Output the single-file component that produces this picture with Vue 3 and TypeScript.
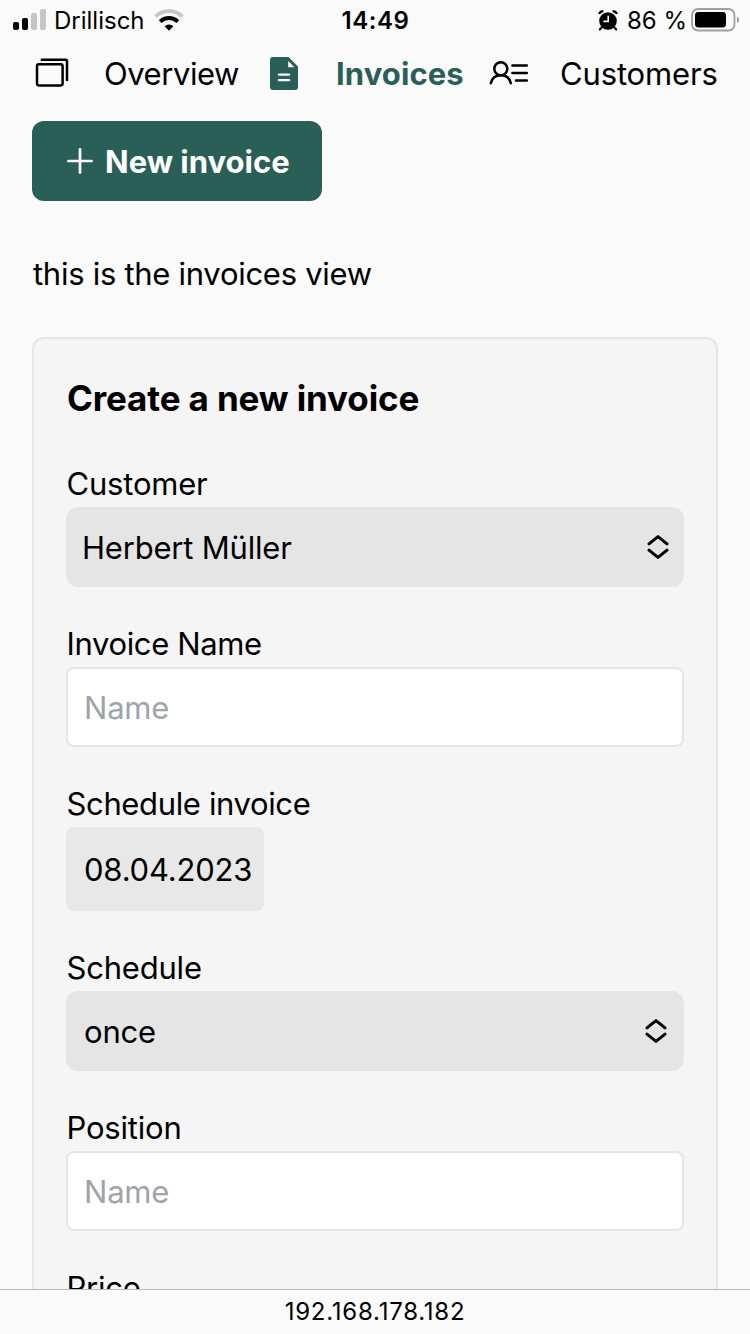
<script setup lang="ts">
interface Field {
  label: string
  kind: 'select' | 'input' | 'date'
  value: string
  name: string
}

const fields: Field[] = [
  { label: 'Customer', kind: 'select', value: 'Herbert Müller', name: 'customer' },
  { label: 'Invoice Name', kind: 'input', value: 'Name', name: 'invoice-name' },
  { label: 'Schedule invoice', kind: 'date', value: '08.04.2023', name: 'date' },
  { label: 'Schedule', kind: 'select', value: 'once', name: 'schedule' },
  { label: 'Position', kind: 'input', value: 'Name', name: 'position' },
  { label: 'Price', kind: 'input', value: '', name: 'price' },
]
</script>

<template>
  <div class="screen">
    <header class="status">
      <div class="status-left">
        <svg class="signal" width="34" height="22" viewBox="0 0 34 22">
          <rect x="0" y="13" width="6" height="8" rx="2" />
          <rect x="9" y="9" width="6" height="12" rx="2" />
          <rect x="18" y="4" width="6" height="17" rx="2" fill="#c6c6c6" />
          <rect x="27" y="0" width="6" height="21" rx="2" fill="#c6c6c6" />
        </svg>
        <span class="carrier">Drillisch</span>
        <svg class="wifi" width="30" height="23" viewBox="0 0 30 23">
          <path d="M1.6 7.4A19.5 19.5 0 0 1 28.4 7.4" fill="none" stroke="#c6c6c6" stroke-width="3.8" />
          <path d="M6.2 12.6A12.8 12.8 0 0 1 23.8 12.6" fill="none" stroke="#000" stroke-width="4" />
          <path d="M10.6 17.2A6.6 6.6 0 0 1 19.4 17.2L15 21.8Z" />
        </svg>
      </div>
      <span class="clock">14:49</span>
      <div class="status-right">
        <svg class="alarm" width="20" height="21" viewBox="0 0 20 21">
          <circle cx="10" cy="11" r="8.8" />
          <path d="M1.2 4A3.6 3.6 0 0 1 5.4 1.4M14.6 1.4A3.6 3.6 0 0 1 18.8 4" fill="none" stroke="#000" stroke-width="2.2" />
          <path d="M3.6 17.4L1.8 19.5M16.4 17.4L18.2 19.5" stroke="#000" stroke-width="2" stroke-linecap="round" />
          <path d="M10.2 5.8V11.4H5.4" fill="none" stroke="#fafafa" stroke-width="1.6" />
        </svg>
        <span class="percent">86 %</span>
        <svg class="battery" width="49" height="24" viewBox="0 0 49 24">
          <rect x="1" y="1" width="42.5" height="21.5" rx="6" fill="none" stroke="#a0a0a0" stroke-width="1.8" />
          <rect x="4" y="4" width="31" height="15.5" rx="3.4" />
          <path d="M46 8.6Q48.2 9.4 48.2 11.8T46 15Z" fill="#a0a0a0" />
        </svg>
      </div>
    </header>

    <nav class="nav">
      <a class="tab overview">
        <svg width="34" height="30" viewBox="0 0 34 30" fill="none" stroke="#000" stroke-width="2.5" stroke-linecap="round" stroke-linejoin="round">
          <rect x="2" y="6.2" width="25.6" height="21.2" rx="1.8" />
          <path d="M6.8 1.7H30.6Q32 1.7 32 3.1V22" />
        </svg>
        <span>Overview</span>
      </a>
      <a class="tab invoices">
        <svg width="28" height="33" viewBox="0 0 28 33">
          <path d="M3 0H18.6L28 9.4V30Q28 33 25 33H3Q0 33 0 30V3Q0 0 3 0Z" fill="#2a5f58" />
          <path d="M18.2 4V10.2H24.4Z" fill="#fafafa" />
          <path d="M8.8 17.6H19.2M8.8 23.2H19.2" stroke="#fafafa" stroke-width="2.2" stroke-linecap="round" />
        </svg>
        <span>Invoices</span>
      </a>
      <a class="tab customers">
        <svg width="40" height="26" viewBox="0 0 40 26" fill="none" stroke="#000" stroke-width="2.5" stroke-linecap="round">
          <circle cx="11.8" cy="7.8" r="6.5" />
          <path d="M1.8 22.2C3 17 6.8 14.3 11.8 14.3S20.6 17 21.8 22.2" />
          <path d="M23.4 4.5H37.8M23.4 12H37.8M27 19.5H37.8" />
        </svg>
        <span>Customers</span>
      </a>
    </nav>

    <main class="content">
      <button class="new-invoice" type="button">
        <svg width="26" height="26" viewBox="0 0 26 26">
          <path d="M13 1.4V24.6M1.4 13H24.6" stroke="#fff" stroke-width="2.7" stroke-linecap="round" />
        </svg>
        <span>New invoice</span>
      </button>
      <p class="intro">this is the invoices view</p>

      <form class="card">
        <h2>Create a new invoice</h2>
        <div v-for="field in fields" :key="field.name" class="field">
          <div class="label" :class="'l-' + field.name">{{ field.label }}</div>
          <div class="control" :class="[field.kind, 'c-' + field.name]">
            <span>{{ field.value }}</span>
            <svg v-if="field.kind === 'select'" width="22" height="26" viewBox="0 0 22 26" fill="none" stroke="#000" stroke-width="3" stroke-linecap="round" stroke-linejoin="round">
              <path d="M2 9.8L11 2.6L20 9.8M2 16.2L11 23.4L20 16.2" />
            </svg>
          </div>
        </div>
      </form>
    </main>

    <footer class="address"><span>192.168.178.182</span></footer>
  </div>
</template>

<style>
body {
  background: #fafafa;
}
</style>

<style scoped>
.screen {
  width: 750px;
  height: 1334px;
  overflow: hidden;
  display: flex;
  flex-direction: column;
  background: #fafafa;
  color: #000;
  font-family: Inter, "Liberation Sans", sans-serif;
  font-size: 31px;
  line-height: 48px;
}
svg {
  display: block;
  flex: none;
}
span {
  white-space: nowrap;
}
.status {
  height: 40px;
  flex: none;
  display: grid;
  grid-template-columns: 1fr auto 1fr;
  align-items: center;
  padding: 0 10px 0 13px;
  font-size: 24px;
  line-height: 38px;
}
.status span {
  padding-top: 2px;
}
.status-left,
.status-right {
  display: flex;
  align-items: center;
}
.status-right {
  justify-content: flex-end;
}
.carrier {
  margin-left: 7px;
}
.wifi {
  margin-left: 9px;
}
.clock {
  font-weight: 600;
  letter-spacing: 0.6px;
  margin-right: 2px;
}
.percent {
  margin: 0 4px 0 9px;
}
.nav {
  height: 68px;
  flex: none;
  display: flex;
  align-items: center;
  padding: 0 0 0 35px;
}
.tab {
  display: flex;
  align-items: center;
}
.overview {
  width: 235px;
  gap: 35px;
  letter-spacing: -0.45px;
}
.overview svg {
  margin-bottom: 2px;
}
.invoices {
  width: 219px;
  gap: 38px;
  color: #2a5f58;
  font-weight: 700;
  letter-spacing: 0.1px;
}
.invoices svg {
  margin-bottom: 2px;
}
.customers {
  gap: 31px;
  letter-spacing: -0.15px;
}
.content {
  flex: 1;
  min-height: 0;
  overflow: hidden;
  padding: 13px 32px 0;
}
.new-invoice {
  display: flex;
  align-items: center;
  gap: 12px;
  width: 290px;
  height: 80px;
  padding: 0 0 0 35px;
  border: 0;
  border-radius: 12px;
  background: #2a5f58;
  color: #fff;
  font: inherit;
  font-weight: 700;
}
.new-invoice span {
  padding-top: 2px;
}
.intro {
  margin: 49px 0 39px;
  padding-left: 1px;
  letter-spacing: -0.28px;
}
.card {
  border: 2px solid #e5e5e5;
  border-radius: 12px;
  background: #f5f5f5;
  padding: 31px 32px 0;
}
h2 {
  margin: 0 0 33px;
  padding-left: 1px;
  font-size: 35px;
  font-weight: 700;
  line-height: 56px;
  letter-spacing: -0.12px;
}
.field {
  margin-bottom: 32px;
}
.label {
  height: 47px;
  padding: 1px 0 0 0.5px;
  letter-spacing: -0.2px;
}
.l-invoice-name,
.l-date {
  letter-spacing: -0.36px;
}
.control {
  display: flex;
  align-items: center;
  justify-content: space-between;
  height: 80px;
  box-sizing: border-box;
}
.control span {
  padding-top: 2px;
  letter-spacing: -0.2px;
}
.select {
  border-radius: 12px;
  background: #e5e5e5;
  padding: 0 15px 0 16px;
}
.c-schedule {
  padding: 0 17px 0 18px;
}
.input {
  border: 2px solid #e5e5e5;
  border-radius: 8px;
  background: #fff;
  color: #a0a3a9;
  padding: 0 16px;
}
.date {
  width: 198px;
  height: 84px;
  border-radius: 8px;
  background: #e8e8e8;
  padding: 0 18px;
}
.address {
  height: 44px;
  flex: none;
  border-top: 1px solid #b8b8b8;
  text-align: center;
  font-size: 24px;
  line-height: 44px;
  letter-spacing: 0.75px;
}
</style>
